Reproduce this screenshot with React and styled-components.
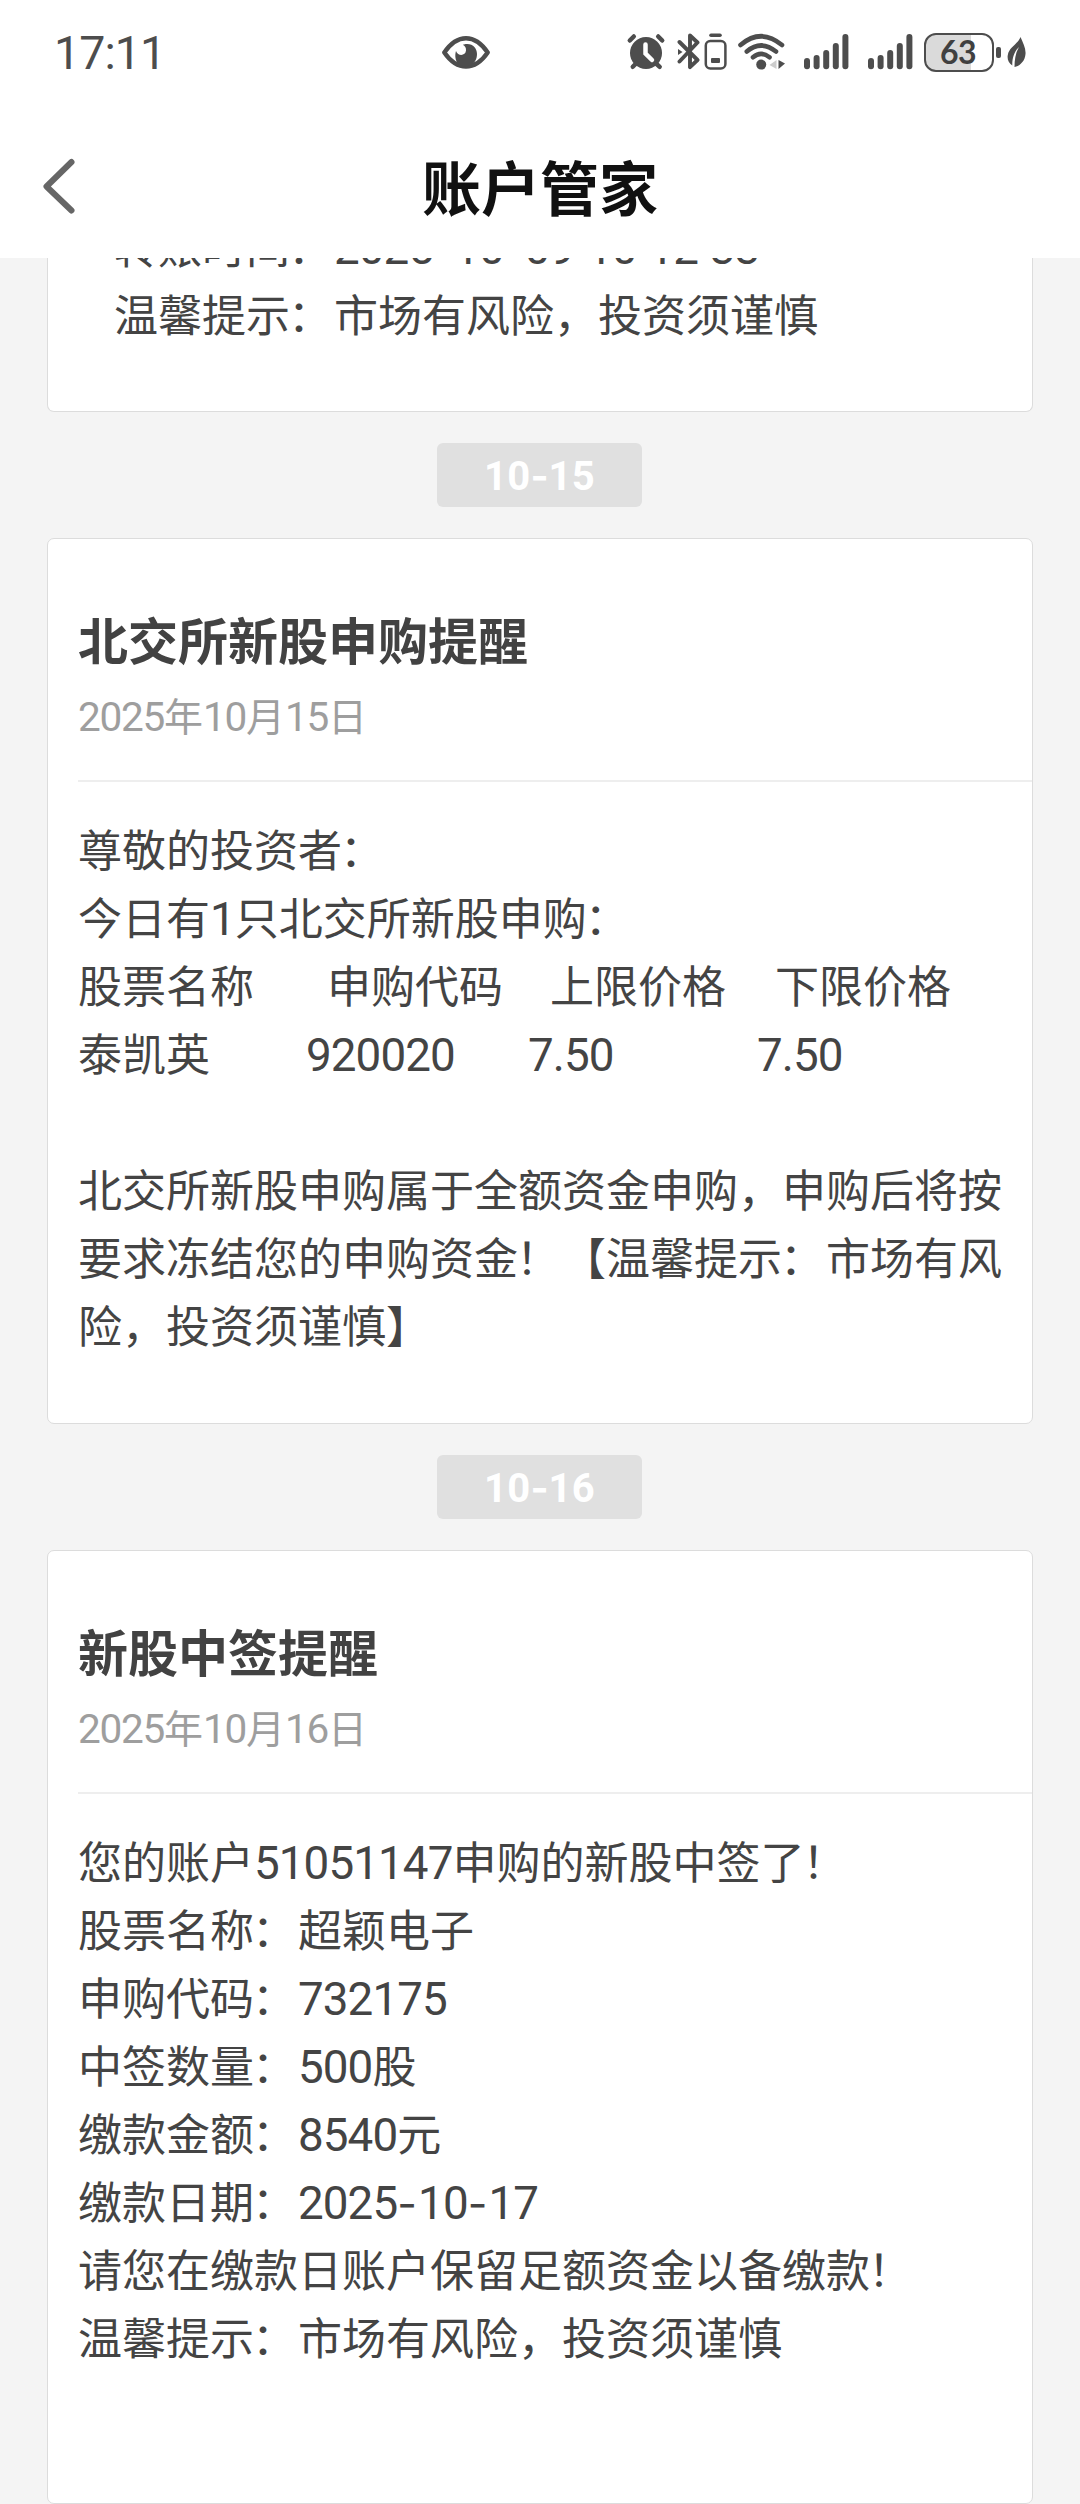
import React from "react";
import styled, { createGlobalStyle } from "styled-components";

const GlobalStyle = createGlobalStyle`
  *, *::before, *::after { box-sizing: border-box; }
  html, body { margin: 0; padding: 0; background: #f4f4f4; }
  body { font-family: "Noto Sans CJK SC", sans-serif; text-spacing-trim: space-all; }
`;

const INK = "#4d4d4d";

const Screen = styled.div`
  width: 1080px;
  height: 2504px;
  overflow: hidden;
  display: flex;
  flex-direction: column;
  background: #f4f4f4;
`;

const Header = styled.header`
  flex: none;
  height: 258px;
  background: #fff;
`;

const StatusBar = styled.div`
  height: 104px;
  display: flex;
  align-items: center;
  padding: 0 53px 0 54px;
  color: ${INK};
`;

const Clock = styled.div`
  width: 388px;
  padding-top: 1px;
  font: 400 46.5px/54px Roboto, sans-serif;
  letter-spacing: -0.9px;
`;

const Icon = styled.svg`
  flex: none;
  display: block;
  margin-left: ${(p) => p.$gap || 0}px;
`;

const Spacer = styled.div`
  flex: 1;
`;

const Battery = styled.div`
  width: 70px;
  height: 39px;
  margin-left: 11px;
  padding-right: 2px;
  border: 2.5px solid ${INK};
  border-radius: 12px;
  background: linear-gradient(to right, #dadada 45px, #fff 45px);
  display: flex;
  align-items: center;
  justify-content: center;
  font: 700 32px/34px Lato, sans-serif;
  letter-spacing: -0.5px;
  color: #404040;
`;

const BatteryTip = styled.div`
  width: 5px;
  height: 11px;
  margin-left: 2px;
  border-radius: 2px;
  background: ${INK};
`;

const TitleBar = styled.div`
  height: 154px;
  display: grid;
  grid-template-columns: 120px 1fr 120px;
  align-items: start;
`;

const BackButton = styled.button`
  border: 0;
  background: none;
  padding: 52px 0 0 40px;
  display: block;
`;

const PageTitle = styled.h1`
  margin: 0;
  padding-top: 37px;
  text-align: center;
  font-size: 59px;
  line-height: 90px;
  font-weight: 700;
  color: #111;
`;

const Feed = styled.main`
  flex: 1;
  min-height: 0;
  padding: 0 47px;
  display: flex;
  flex-direction: column;
  align-items: center;
  overflow: hidden;
`;

const Card = styled.article`
  flex: none;
  width: 986px;
  height: ${(p) => p.$height}px;
  background: #fff;
  border: 1px solid #dcdcdc;
  border-radius: 7px;
`;

const ClippedCard = styled(Card)`
  height: 154px;
  border-top: 0;
  border-radius: 0 0 7px 7px;
  overflow: hidden;
  display: flex;
  flex-direction: column;
  justify-content: flex-end;
  padding: 0 0 64px 66px;
`;

const DateChip = styled.div`
  flex: none;
  width: 205px;
  height: 64px;
  margin: 31px 1px 31px 0;
  padding-top: 3px;
  border-radius: 6px;
  background: #e0e0e0;
  color: #fff;
  display: flex;
  align-items: center;
  justify-content: center;
  font: 700 40px/60px Roboto, sans-serif;
  letter-spacing: 0.2px;
`;

const CardHead = styled.div`
  margin-left: 30px;
  height: 243px;
  padding-top: 62px;
  border-bottom: 2px solid #eee;
`;

const CardTitle = styled.h2`
  margin: 0;
  font-size: 50px;
  line-height: 74px;
  font-weight: 700;
  color: #424242;
`;

const CardDate = styled.div`
  margin-top: 10px;
  font-size: 39px;
  line-height: 58px;
  color: #9e9e9e;
`;

const Body = styled.div`
  padding: 32px 0 0 30px;
`;

const Line = styled.div`
  height: 68px;
  font-size: 44px;
  line-height: 68px;
  white-space: pre;
  color: #444;
`;

const Columns = styled(Line)`
  display: grid;
  grid-template-columns: ${(p) => p.$cols};
`;

const Num = styled.span`
  font-family: Roboto, sans-serif;
  font-size: 1.04em;
  line-height: 1;
  letter-spacing: ${(p) => p.$track ?? -0.9}px;
`;

const Dash = styled.span`
  font-family: Inter, sans-serif;
  font-size: 0.97em;
  line-height: 1;
  letter-spacing: 1.2px;
`;

const ChipDash = styled(Dash)`
  letter-spacing: 0;
`;

const Mark = styled.span`
  margin: 0 2px 0 -2px;
`;

const RaisedColon = styled.span`
  display: inline-block;
  margin-right: 1.5px;
  line-height: 1;
  transform: translateY(-7px);
`;

const Gap = styled.span`
  letter-spacing: 1.5px;
`;

const BAR_TOPS = [58, 55, 50, 43, 34];

function Signal({ gap }) {
  return (
    <Icon $gap={gap} width="45" height="36" viewBox="0 34 45 36" fill={INK}>
      {BAR_TOPS.map((top, i) => (
        <rect key={top} x={i * 9.6} y={top} width="6" height={69.3 - top} rx="3" />
      ))}
    </Icon>
  );
}

function Status() {
  return (
    <StatusBar>
      <Clock>17:11</Clock>
      <Icon width="48" height="36" viewBox="442 33 48 36">
        <path d="M444.3 51.5Q454 37.2 466 37.2T487.7 51.5Q478 65.6 466 65.6T444.3 51.5Z" fill="none" stroke={INK} strokeWidth="4.4" strokeLinejoin="round" />
        <path d="M464 43.5C472 41.500 477 47 477 53C477 59 474 61.500 472.500 63.500L466 66L458.500 63.500C455.500 60 454.500 55 456 50C458 55.500 465.500 55 466 49.500C466.200 46.500 465 45 462.800 43.800Z" fill={INK} />
      </Icon>
      <Spacer />
      <Icon width="40" height="38" viewBox="626 33 40 38" stroke={INK} strokeLinecap="round" fill="none">
        <circle cx="646" cy="53" r="16" fill={INK} stroke="none" />
        <path d="M629.800 40.500L633.800 36.500M662.200 40.500L658.200 36.500" strokeWidth="4.500" />
        <path d="M636.500 63L632.800 66.800M655.500 63L659.700 66.800" strokeWidth="4.500" />
        <path d="M645.500 44.500V53.500L652 60" stroke="#fff" strokeWidth="4.500" />
      </Icon>
      <Icon $gap={11} width="50" height="38" viewBox="677 33 50 38" stroke={INK} fill="none" strokeLinecap="round" strokeLinejoin="round">
        <path d="M679.500 42L697.500 60L690 67.200V35.500L697.500 42.500L679.500 61.500" strokeWidth="3.900" />
        <path d="M678 49L682.500 52L678 55Z" fill={INK} stroke="none" />
        <rect x="705.800" y="41" width="19.600" height="27.500" rx="4.500" strokeWidth="2.500" />
        <path d="M711 35.200H720" strokeWidth="3.600" />
        <rect x="711" y="58" width="9" height="5" rx="1" fill={INK} stroke="none" />
      </Icon>
      <Icon $gap={10} width="49" height="38" viewBox="737 33 49 38" stroke={INK} fill="none" strokeLinecap="round">
        <path d="M740.500 45Q761 27.500 782 45M746.800 51.500Q761 39.500 776 51.500M753 57.300Q761 50.500 769.500 57.300" strokeWidth="4.600" />
        <circle cx="761.200" cy="64.600" r="5" fill={INK} stroke="none" />
        <path d="M776.500 60V69L769.500 65Z" fill="#ccc" stroke="none" />
        <path d="M778.500 60L785 63.500L778.500 69Z" fill={INK} stroke="none" />
      </Icon>
      <Signal gap={18} />
      <Signal gap={19} />
      <Battery>63</Battery>
      <BatteryTip />
      <Icon $gap={6} width="20" height="31" viewBox="1007 36 20 31">
        <path d="M1020.500 36C1023 42 1026 47 1025.500 53C1025 60 1020 65 1014.500 66C1014.500 58 1016 51 1019 46C1014.500 50 1012 57 1012.300 64.500C1008.500 62 1007 58 1007.800 54C1009 46 1018 43 1020.500 36Z" fill={INK} />
      </Icon>
    </StatusBar>
  );
}

function DateText({ month, day }) {
  return (
    <CardDate>
      <Num $track={-1.3}>2025</Num>年<Num $track={-1.3}>{month}</Num>月<Num $track={-1.3}>{day}</Num>日
    </CardDate>
  );
}

function Field({ label, children }) {
  return <Line>{label}<Mark>：</Mark>{children}</Line>;
}

export default function App() {
  return (
    <>
      <GlobalStyle />
      <Screen>
        <Header>
          <Status />
          <TitleBar>
            <BackButton aria-label="返回">
              <Icon width="36" height="60" viewBox="41 156 36 60">
                <path d="M72.500 162L47.500 186.500L72.500 210.500" fill="none" stroke="#666" strokeWidth="6" strokeLinecap="round" strokeLinejoin="round" />
              </Icon>
            </BackButton>
            <PageTitle>账户管家</PageTitle>
          </TitleBar>
        </Header>
        <Feed>
          <ClippedCard>
            <Field label="转账时间">
              <Num>2025</Num><Dash>-</Dash><Num>10</Num><Dash>-</Dash><Num>09<Gap> </Gap>10<RaisedColon>:</RaisedColon>12<RaisedColon>:</RaisedColon>33</Num>
            </Field>
            <Field label="温馨提示">市场有风险，投资须谨慎</Field>
          </ClippedCard>

          <DateChip>10<ChipDash>-</ChipDash>15</DateChip>

          <Card $height={886}>
            <CardHead>
              <CardTitle>北交所新股申购提醒</CardTitle>
              <DateText month="10" day="15" />
            </CardHead>
            <Body>
              <Line>尊敬的投资者<Mark>：</Mark></Line>
              <Line>今日有<Num>1</Num>只北交所新股申购<Mark>：</Mark></Line>
              <Columns $cols="249px 223px 225px auto">
                <span>股票名称</span>
                <span>申购代码</span>
                <span>上限价格</span>
                <span>下限价格</span>
              </Columns>
              <Columns $cols="228px 222px 229px auto">
                <span>泰凯英</span>
                <span><Num>920020</Num></span>
                <span><Num>7.50</Num></span>
                <span><Num>7.50</Num></span>
              </Columns>
              <Line />
              <Line>北交所新股申购属于全额资金申购，申购后将按</Line>
              <Line>要求冻结您的申购资金<Mark>！</Mark>【温馨提示<Mark>：</Mark>市场有风</Line>
              <Line>险，投资须谨慎】</Line>
            </Body>
          </Card>

          <DateChip>10<ChipDash>-</ChipDash>16</DateChip>

          <Card $height={954}>
            <CardHead>
              <CardTitle>新股中签提醒</CardTitle>
              <DateText month="10" day="16" />
            </CardHead>
            <Body>
              <Line>您的账户<Num>51051147</Num>申购的新股中签了<Mark>！</Mark></Line>
              <Field label="股票名称">超颖电子</Field>
              <Field label="申购代码"><Num>732175</Num></Field>
              <Field label="中签数量"><Num>500</Num>股</Field>
              <Field label="缴款金额"><Num>8540</Num>元</Field>
              <Field label="缴款日期">
                <Num>2025</Num><Dash>-</Dash><Num>10</Num><Dash>-</Dash><Num>17</Num>
              </Field>
              <Line>请您在缴款日账户保留足额资金以备缴款<Mark>！</Mark></Line>
              <Field label="温馨提示">市场有风险，投资须谨慎</Field>
            </Body>
          </Card>
        </Feed>
      </Screen>
    </>
  );
}
